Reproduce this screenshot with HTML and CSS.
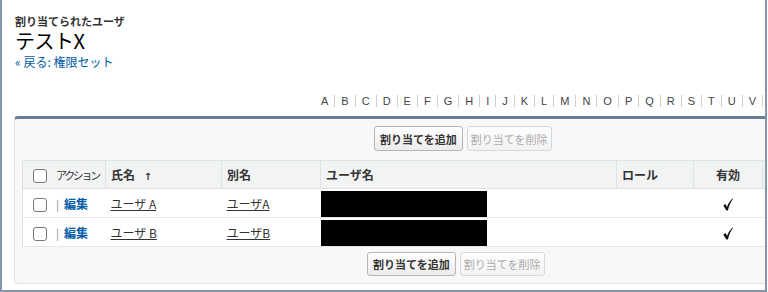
FILE: index.html
```html
<!DOCTYPE html>
<html lang="ja">
<head>
<meta charset="utf-8">
<link rel="stylesheet" href="styles.css">
</head>
<body>
<div class="frame">
  <div class="page-head">
    <div class="subtitle">割り当てられたユーザ</div>
    <h1 class="title">テストX</h1>
    <div class="back"><span class="chev">«</span> <a href="#">戻る: 権限セット</a></div>
  </div>
  <div class="alpha">
    <span>A</span><span>B</span><span>C</span><span>D</span><span>E</span><span>F</span><span>G</span><span>H</span><span>I</span><span>J</span><span>K</span><span>L</span><span>M</span><span>N</span><span>O</span><span>P</span><span>Q</span><span>R</span><span>S</span><span>T</span><span>U</span><span>V</span>
  </div>
  <div class="panel">
    <div class="btns btns-top">
      <button class="btn">割り当てを追加</button>
      <button class="btn disabled">割り当てを削除</button>
    </div>
    <table class="list">
      <colgroup>
        <col class="c1"><col class="c2"><col class="c3"><col class="c4"><col class="c5"><col class="c6"><col class="c7">
      </colgroup>
      <thead>
        <tr>
          <th class="first"><span class="cb"></span><span class="act">アクション</span></th>
          <th>氏名 <span class="arrow">↑</span></th>
          <th>別名</th>
          <th>ユーザ名</th>
          <th>ロール</th>
          <th class="center">有効</th>
          <th></th>
        </tr>
      </thead>
      <tbody>
        <tr>
          <td><span class="cb"></span><span class="bar">|</span><a class="edit" href="#">編集</a></td>
          <td><a class="ul" href="#">ユーザ A</a></td>
          <td><a class="ul" href="#">ユーザA</a></td>
          <td class="redact-cell"><div class="redact"></div></td>
          <td></td>
          <td class="center"><svg class="check" width="10" height="13" viewBox="0 0 10 13"><path d="M0.3 7.4 L2.6 6.0 L4.0 9.0 C5.4 5.4 7.4 2.4 9.8 0.3 L9.9 1.2 C7.8 3.6 6.0 7.4 4.9 12.6 L3.4 12.6 Z" fill="#111"/></svg></td>
          <td></td>
        </tr>
        <tr>
          <td><span class="cb"></span><span class="bar">|</span><a class="edit" href="#">編集</a></td>
          <td><a class="ul" href="#">ユーザ B</a></td>
          <td><a class="ul" href="#">ユーザB</a></td>
          <td class="redact-cell"><div class="redact"></div></td>
          <td></td>
          <td class="center"><svg class="check" width="10" height="13" viewBox="0 0 10 13"><path d="M0.3 7.4 L2.6 6.0 L4.0 9.0 C5.4 5.4 7.4 2.4 9.8 0.3 L9.9 1.2 C7.8 3.6 6.0 7.4 4.9 12.6 L3.4 12.6 Z" fill="#111"/></svg></td>
          <td></td>
        </tr>
      </tbody>
    </table>
    <div class="btns btns-bottom">
      <button class="btn">割り当てを追加</button>
      <button class="btn disabled">割り当てを削除</button>
    </div>
  </div>
</div>
</body>
</html>
```
FILE: styles.css
```css
html, body {
  margin: 0;
  padding: 0;
  background: #ffffff;
}
body {
  font-family: "Noto Sans CJK JP", "Liberation Sans", sans-serif;
  color: #222;
}
.frame {
  box-sizing: border-box;
  width: 767px;
  height: 292px;
  border-left: 2px solid #8496ad;
  border-right: 2px solid #8496ad;
  border-bottom: 2px solid #8496ad;
  overflow: hidden;
  background: #fff;
}
.page-head {
  padding: 13px 0 0 13px;
  height: 72px;
  box-sizing: border-box;
}
.subtitle {
  font-size: 11px;
  line-height: 16px;
  font-weight: bold;
  color: #333;
}
.title {
  margin: 0;
  font-size: 20px;
  line-height: 24px;
  font-weight: normal;
  color: #000;
  letter-spacing: -0.5px;
}
.back {
  font-size: 12px;
  line-height: 17px;
  color: #015ba7;
}
.back a {
  color: #015ba7;
  text-decoration: none;
}
.chev {
  color: #015ba7;
}
.alpha {
  display: flex;
  white-space: nowrap;
  padding-left: 313px;
  margin-top: 23px;
  font-family: "Liberation Sans", sans-serif;
  font-size: 11px;
  line-height: 12px;
  color: #444;
}
.alpha span {
  flex: none;
  padding: 0 6px;
  border-right: 1px solid #cfcfcf;
}
.panel {
  margin: 9px 0 0 12px;
  width: 800px;
  height: 168px;
  box-sizing: border-box;
  background: #f8f8f8;
  border: 1px solid #e4e4e4;
  border-top: 3px solid #6c7e96;
  border-radius: 4px;
  padding: 7px 7px 0 7px;
}
.btns {
  display: flex;
  gap: 4px;
}
.btns-top {
  padding-left: 352px;
}
.btns-bottom {
  padding-left: 345px;
  margin-top: 5px;
}
.btn {
  font-family: "Noto Sans CJK JP", sans-serif;
  font-size: 11px;
  font-weight: bold;
  color: #333;
  height: 25px;
  padding: 0 5px;
  border: 1px solid #b5b5b5;
  border-radius: 3px;
  background: linear-gradient(#ffffff, #ececec);
  line-height: 20px;
}
.btn.disabled {
  color: #ababab;
  font-weight: normal;
  border-color: #d8d8d8;
  background: linear-gradient(#fdfdfd, #f2f2f2);
  padding: 0 3px;
}
.btns-bottom .btn { height: 24px; }
.list {
  margin-top: 9px;
  border-collapse: collapse;
  table-layout: fixed;
  width: 790px;
  background: #fff;
  border: 1px solid #e0e3e5;
  font-size: 12px;
}
.c1 { width: 83px; }
.c2 { width: 116px; }
.c3 { width: 99px; }
.c4 { width: 296px; }
.c5 { width: 77px; }
.c6 { width: 69px; }
.c7 { width: 50px; }
.list th {
  background: #f2f3f3;
  border: 1px solid #e0e3e5;
  height: 27px;
  padding: 0 5px;
  text-align: left;
  font-weight: bold;
  font-size: 12px;
  color: #333;
  white-space: nowrap;
  overflow: hidden;
}
.list th.first {
  padding-right: 0;
}
.list th .act {
  font-size: 11px;
  letter-spacing: -2.3px;
  font-weight: normal;
  color: #333;
}
.list .center { text-align: center; }
.arrow {
  font-family: "DejaVu Sans", sans-serif;
  font-size: 10px;
  margin-left: 6px;
  color: #333;
}
.list td {
  height: 28px;
  padding: 0 5px;
  border-bottom: 1px solid #e9e9e9;
  white-space: nowrap;
  color: #333;
}
.list td.redact-cell {
  padding: 0;
  vertical-align: top;
}
.redact {
  width: 166px;
  height: 26px;
  background: #000;
  margin-top: 2px;
}
.cb {
  display: inline-block;
  width: 12px;
  height: 12px;
  border: 1px solid #777;
  border-radius: 3px;
  background: #fff;
  vertical-align: -3px;
  margin: 0 9px 0 5px;
}
.bar {
  color: #888;
  font-size: 11px;
  margin-right: 5px;
}
.edit {
  color: #015ba7;
  text-decoration: none;
  font-weight: bold;
}
.ul {
  color: #333;
  text-decoration: underline;
}
.check {
  display: inline-block;
  vertical-align: -2px;
}
```
